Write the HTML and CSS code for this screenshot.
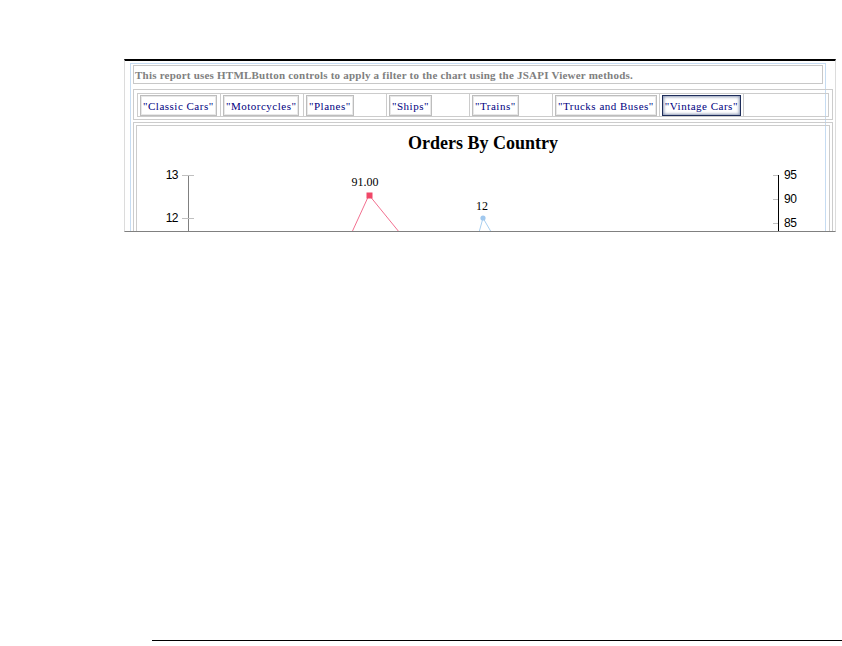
FILE: index.html
```html
<!DOCTYPE html>
<html lang="en">
<head>
  <meta charset="UTF-8">
  <title>HTMLButton filter report</title>
  <link rel="stylesheet" href="styles.css">
</head>
<body>
  <div class="doc">
    <div class="viewer">
      <div class="report">
        <div class="note">This report uses HTMLButton controls to apply a filter to the chart using the JSAPI Viewer methods.</div>
        <div class="filter-bar">
          <table class="filters">
            <tr>
              <td><button class="btn">"Classic Cars"</button></td>
              <td><button class="btn">"Motorcycles"</button></td>
              <td><button class="btn">"Planes"</button></td>
              <td><button class="btn">"Ships"</button></td>
              <td><button class="btn">"Trains"</button></td>
              <td><button class="btn">"Trucks and Buses"</button></td>
              <td><button class="btn focused">"Vintage Cars"</button></td>
              <td class="filler"></td>
            </tr>
          </table>
        </div>
        <div class="chart-wrap">
          <div class="chart">
            <h1 class="chart-title">Orders By Country</h1>
            <svg class="plot" width="692" height="100" viewBox="0 0 692 100">
              <!-- left axis -->
              <line x1="51.5" y1="21" x2="51.5" y2="100" stroke="#808080"/>
              <line x1="45" y1="21.5" x2="57" y2="21.5" stroke="#c0c0c0"/>
              <line x1="45" y1="64.5" x2="57" y2="64.5" stroke="#c0c0c0"/>
              <text x="41" y="25" class="tick" text-anchor="end">13</text>
              <text x="41" y="68" class="tick" text-anchor="end">12</text>
              <!-- right axis -->
              <line x1="641.5" y1="21" x2="641.5" y2="100" stroke="#000"/>
              <line x1="636" y1="21.5" x2="641" y2="21.5" stroke="#c0c0c0"/>
              <line x1="636" y1="45.5" x2="641" y2="45.5" stroke="#c0c0c0"/>
              <line x1="636" y1="69.5" x2="641" y2="69.5" stroke="#c0c0c0"/>
              <text x="647" y="25" class="tick">95</text>
              <text x="647" y="49" class="tick">90</text>
              <text x="647" y="73" class="tick">85</text>
              <!-- series: orders -->
              <polyline points="205,100 232,41 280,100" fill="none" stroke="#f27090"/>
              <rect x="229.5" y="38.5" width="6" height="6" fill="#f04868"/>
              <text x="228" y="32" class="val" text-anchor="middle">91.00</text>
              <!-- series: countries -->
              <polyline points="336,100 346,64 367,100" fill="none" stroke="#a8cff0"/>
              <circle cx="346" cy="64" r="2.6" fill="#a0c8ee"/>
              <text x="345" y="56" class="val" text-anchor="middle">12</text>
            </svg>
          </div>
        </div>
      </div>
    </div>
    <div class="rule"></div>
  </div>
</body>
</html>
```

FILE: styles.css
```css
body { margin: 0; background: #fff; font-family: "Liberation Serif", "Times New Roman", serif; }
.doc { padding: 59px 0 0 124px; }
.viewer {
  width: 712px;
  height: 173px;
  box-sizing: border-box;
  border-top: 2px solid #000;
  border-bottom: 1px solid #808080;
  border-left: 1px solid #dcdcdc;
  border-right: 1px solid #dcdcdc;
  overflow: hidden;
}
.report {
  margin: 2px 0 0 5px;
  width: 696px;
  height: 300px;
  box-sizing: border-box;
  border: 1px solid #c6dcf2;
  padding: 1px 2px;
}
.note {
  border: 1px solid #c8c8c8;
  height: 17px;
  line-height: 18px;
  padding-left: 1px;
  font-size: 11px;
  letter-spacing: 0.22px;
  font-weight: bold;
  color: #808080;
  white-space: nowrap;
}
.filter-bar {
  margin-top: 5px;
  width: 700px;
  box-sizing: border-box;
  border: 1px solid #ccc;
  padding: 3px 3px 2px 3px;
}
.filters { border-collapse: collapse; width: 100%; }
.filters td {
  border: 1px solid #ccc;
  padding: 1px 2px 0 2px;
  width: 78px;
  white-space: nowrap;
}
.filters td.filler { width: auto; }
.btn {
  display: block;
  height: 21px;
  padding: 0 2px;
  background: #fff;
  border: 1px solid #bdbdbd;
  box-shadow: inset 0 0 0 1px #e8e8e8;
  font-family: "Liberation Serif", "Times New Roman", serif;
  font-size: 11px;
  letter-spacing: 0.5px;
  color: #000080;
  cursor: pointer;
}
.btn.focused {
  border-color: #1e2d5a;
  box-shadow: inset 0 0 3px 1px #8a96b4;
}
.chart-wrap {
  margin-top: 2px;
  width: 700px;
  box-sizing: border-box;
  border: 1px solid #ccc;
  padding: 2px;
}
.chart { border: 1px solid #ccc; height: 200px; }
.chart-title {
  margin: 0;
  padding-top: 6px;
  height: 22px;
  line-height: 22px;
  text-align: center;
  font-size: 18px;
  font-weight: bold;
  color: #000;
}
.plot { display: block; }
.tick { font-family: "Liberation Sans", Arial, sans-serif; font-size: 12px; letter-spacing: -0.5px; fill: #000; }
.val { font-family: "Liberation Serif", serif; font-size: 12px; fill: #000; }
.rule { margin: 408px 0 0 28px; border-top: 1px solid #000; }
```
